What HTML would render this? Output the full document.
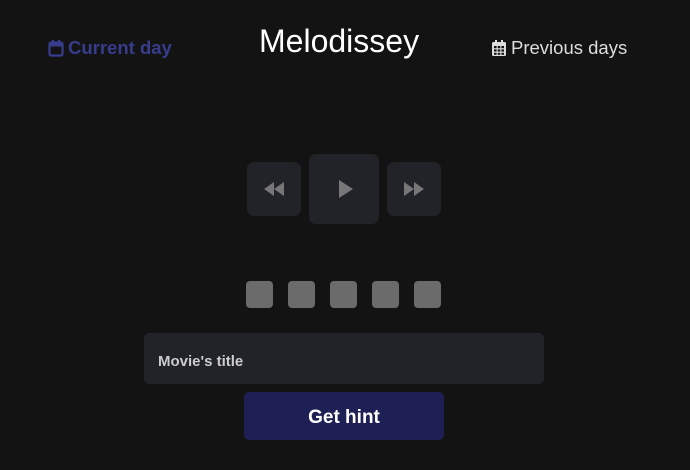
<!DOCTYPE html>
<html><head><style>
body{margin:0;width:690px;height:470px;background:#131313;font-family:"Liberation Sans",sans-serif;position:relative;overflow:hidden}
.a{position:absolute}
.btn{position:absolute;background:#212328;border-radius:7px}
.sq{position:absolute;top:281px;width:27px;height:27px;background:#6b6b6b;border-radius:4px}
</style></head><body>
<div class="a" style="left:48px;top:37px;color:#373c8c;font-weight:bold;font-size:18.5px;display:flex;align-items:center;gap:4px">
<svg width="16" height="18" viewBox="0 0 16 18"><rect x="1.5" y="3.5" width="13" height="13" rx="1.5" fill="none" stroke="#373c8c" stroke-width="2.2"/><rect x="1.5" y="3.5" width="13" height="4" fill="#373c8c"/><rect x="4" y="1" width="2" height="4" fill="#373c8c"/><rect x="10" y="1" width="2" height="4" fill="#373c8c"/></svg>Current day</div>
<div class="a" style="left:259px;top:23px;color:#fff;font-size:32px">Melodissey</div>
<div class="a" style="left:491px;top:37px;color:#ddd;font-size:18.5px;display:flex;align-items:center;gap:4px">
<svg width="16" height="18" viewBox="0 0 16 18"><rect x="1" y="3" width="14" height="14" rx="1.5" fill="#ddd"/><rect x="4" y="1" width="2" height="4" fill="#ddd"/><rect x="10" y="1" width="2" height="4" fill="#ddd"/><g fill="#131313"><rect x="3" y="7" width="2.6" height="2.2"/><rect x="6.7" y="7" width="2.6" height="2.2"/><rect x="10.4" y="7" width="2.6" height="2.2"/><rect x="3" y="10.4" width="2.6" height="2.2"/><rect x="6.7" y="10.4" width="2.6" height="2.2"/><rect x="10.4" y="10.4" width="2.6" height="2.2"/><rect x="3" y="13.8" width="2.6" height="2"/><rect x="6.7" y="13.8" width="2.6" height="2"/><rect x="10.4" y="13.8" width="2.6" height="2"/></g></svg>Previous days</div>
<div class="btn" style="left:247px;top:162px;width:54px;height:54px"><svg class="a" style="left:16px;top:19px" width="22" height="16" viewBox="0 0 22 16"><path d="M11 1L1 8l10 7zM21 1L11 8l10 7z" fill="#777"/></svg></div>
<div class="btn" style="left:309px;top:154px;width:70px;height:70px"><svg class="a" style="left:29px;top:25px" width="16" height="20" viewBox="0 0 16 20"><path d="M1 1L15 10 1 19z" fill="#777"/></svg></div>
<div class="btn" style="left:387px;top:162px;width:54px;height:54px"><svg class="a" style="left:16px;top:19px" width="22" height="16" viewBox="0 0 22 16"><path d="M1 1l10 7-10 7zM11 1l10 7-10 7z" fill="#777"/></svg></div>
<div class="sq" style="left:246px"></div><div class="sq" style="left:288px"></div><div class="sq" style="left:330px"></div><div class="sq" style="left:372px"></div><div class="sq" style="left:414px"></div>
<div class="a" style="left:144px;top:333px;width:400px;height:51px;background:#212328;border-radius:5px;box-sizing:border-box;padding-left:14px;padding-top:3px;line-height:51px;color:#ccc;font-weight:bold;font-size:15px">Movie's title</div>
<div class="a" style="left:244px;top:392px;width:200px;height:48px;background:#1e1f54;border-radius:5px;color:#fff;font-size:19px;font-weight:bold;text-align:center;line-height:52px">Get hint</div>
</body></html>
